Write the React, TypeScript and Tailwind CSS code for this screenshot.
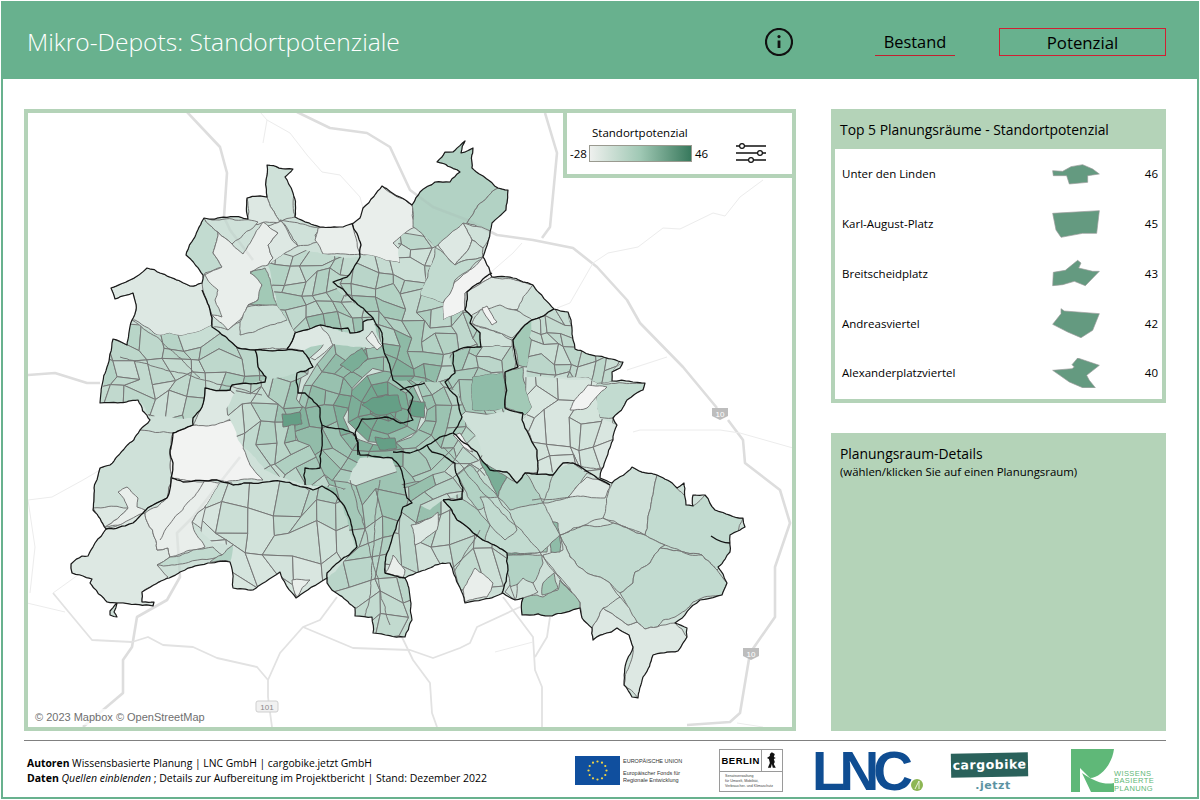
import React from 'react';

const FONT = { fontFamily: '"Open Sans", "Noto Sans", sans-serif' };

// colour ramp of the choropleth
const C = ['#f2f3f2', '#e9eeeb', '#dde8e3', '#cfe1d9', '#c2dbd0', '#b2d2c4', '#a2c9b6', '#8fbca8', '#7aae97', '#659f86', '#4f8f74'];

const RAMP: [number, number, number][] = [
  [238, 241, 239],
  [214, 229, 222],
  [179, 210, 196],
  [128, 177, 155],
  [70, 138, 109],
];

function rampColor(t: number) {
  const v = Math.max(0, Math.min(0.999, t)) * 4;
  const i = Math.floor(v);
  const f = v - i;
  const c = RAMP[i].map((a, k) => Math.round(a + (RAMP[i + 1][k] - a) * f));
  return `rgb(${c[0]},${c[1]},${c[2]})`;
}

function rng(seed: number) {
  let a = seed;
  return () => {
    a = (a + 0x6d2b79f5) | 0;
    let t = Math.imul(a ^ (a >>> 15), 1 | a);
    t = (t + Math.imul(t ^ (t >>> 7), 61 | t)) ^ t;
    return ((t ^ (t >>> 14)) >>> 0) / 4294967296;
  };
}

// edges get the same wiggle from both sides, so shared borders stay shared
function hash(x: number, y: number, k: number) {
  const s = Math.sin(Math.round(x * 10) * 12.9898 + Math.round(y * 10) * 78.233 + k * 37.7) * 43758.5453;
  return s - Math.floor(s);
}

function subdivide(a: number[], b: number[], out: number[][]) {
  const len = Math.hypot(a[0] - b[0], a[1] - b[1]);
  if (len < 5) return;
  const mx = (a[0] + b[0]) / 2;
  const my = (a[1] + b[1]) / 2;
  const d = Math.min(len * 0.07, 1.8);
  const mid = [mx + (hash(mx, my, 1) - 0.5) * 2 * d, my + (hash(mx, my, 2) - 0.5) * 2 * d];
  subdivide(a, mid, out);
  out.push(mid);
  subdivide(mid, b, out);
}

function wiggle(points: string, closed = true) {
  const pts = points.split(' ').map((p) => p.split(',').map(Number));
  const out: number[][] = [];
  pts.forEach((p, i) => {
    out.push(p);
    const next = pts[i + 1] ?? (closed ? pts[0] : null);
    if (next) subdivide(p, next, out);
  });
  return out.map((p) => `${p[0].toFixed(1)},${p[1].toFixed(1)}`).join(' ');
}

const HOT: [number, number, number, number][] = [
  [378, 404, 0.14, 20],
  [292, 418, 0.14, 13],
  [353, 362, 0.14, 14],
  [420, 408, 0.14, 13],
  [384, 442, 0.1, 16],
  [428, 488, 0.2, 9],
  [445, 430, 0.05, 14],
];

function field(x: number, y: number) {
  let t = 0.27 + 0.42 * Math.exp(-((x - 360) ** 2 + (y - 415) ** 2) / (2 * 76 * 76));
  for (const [hx, hy, a, s] of HOT) t += a * Math.exp(-((x - hx) ** 2 + (y - hy) ** 2) / (2 * s * s));
  return t;
}

type Cell = { pts: string; fill: string };

function quadCells(grid: [number, number][][], seed: number, base: number, spread: number) {
  const r = rng(seed + 99);
  const cells: Cell[] = [];
  const used = new Set<string>();
  const rows = grid.length - 1;
  const cols = grid[0].length - 1;
  for (let i = 0; i < rows; i++) {
    for (let j = 0; j < cols; j++) {
      if (used.has(`${i}:${j}`)) continue;
      const roll = r();
      let q: [number, number][];
      if (roll < 0.2 && j + 1 < cols && !used.has(`${i}:${j + 1}`)) {
        used.add(`${i}:${j + 1}`);
        q = [grid[i][j], grid[i][j + 1], grid[i][j + 2], grid[i + 1][j + 2], grid[i + 1][j + 1], grid[i + 1][j]];
      } else if (roll < 0.38 && i + 1 < rows && !used.has(`${i + 1}:${j}`)) {
        used.add(`${i + 1}:${j}`);
        q = [grid[i][j], grid[i][j + 1], grid[i + 1][j + 1], grid[i + 2][j + 1], grid[i + 2][j], grid[i + 1][j]];
      } else {
        q = [grid[i][j], grid[i][j + 1], grid[i + 1][j + 1], grid[i + 1][j]];
      }
      const cx = q.reduce((s, p) => s + p[0], 0) / q.length;
      const cy = q.reduce((s, p) => s + p[1], 0) / q.length;
      cells.push({
        pts: q.map((p) => `${p[0].toFixed(1)},${p[1].toFixed(1)}`).join(' '),
        fill: rampColor(field(cx, cy) + base + (r() - 0.5) * spread),
      });
    }
  }
  return cells;
}

function rectMesh(x0: number, y0: number, x1: number, y1: number, cols: number, rows: number, seed: number, base = 0, spread = 0.16) {
  const r = rng(seed);
  const dx = (x1 - x0) / cols;
  const dy = (y1 - y0) / rows;
  const grid: [number, number][][] = [];
  for (let i = 0; i <= rows; i++) {
    const row: [number, number][] = [];
    for (let j = 0; j <= cols; j++) {
      const px = x0 + j * dx;
      const py = y0 + i * dy;
      row.push([
        px + (r() - 0.5) * dx * 0.8 + 5 * Math.sin(py / 19 + seed),
        py + (r() - 0.5) * dy * 0.8 + 5 * Math.sin(px / 23 + seed),
      ]);
    }
    grid.push(row);
  }
  return quadCells(grid, seed, base, spread);
}

function polarMesh(radii: number[], sectors: number, seed: number, base = 0, spread = 0.12) {
  const r = rng(seed);
  const grid: [number, number][][] = [];
  radii.forEach((rad) => {
    const row: [number, number][] = [];
    for (let j = 0; j <= sectors; j++) {
      const a = ((j % sectors) / sectors) * Math.PI * 2;
      const k = rad * 0.05 + 1.2;
      const wob = 1 + 0.05 * Math.sin(a * 3 + seed);
      row.push([385 + Math.cos(a) * rad * 1.08 * wob + (r() - 0.5) * k * 2, 408 + Math.sin(a) * rad * wob + (r() - 0.5) * k * 2]);
    }
    row[sectors] = row[0];
    grid.push(row);
  });
  return quadCells(grid, seed, base, spread);
}

const OUTLINE = wiggle(
  '100,403 107,367 113,339 127,345 132,320 136,310 133,293 115,299 111,288 130,280 147,268 160,273 190,286 202,283 203,275 186,255 204,218 248,219 247,198 267,197 267,165 293,169 285,177 293,193 295,217 320,227 343,227 360,218 363,208 382,186 400,197 412,205 420,192 435,182 450,182 460,172 437,162 445,152 453,152 465,141 461,153 473,148 472,168 498,188 508,190 506,210 492,223 483,257 492,277 513,278 533,285 554,309 568,312 573,340 575,349 623,362 620,368 612,372 612,381 645,383 643,390 627,400 613,418 617,425 613,440 600,478 612,483 632,467 657,475 677,488 684,483 686,505 693,506 693,495 705,495 715,510 743,518 745,527 730,535 730,552 718,567 727,583 722,595 700,600 675,623 687,628 687,637 678,651 653,655 643,677 638,698 632,697 624,685 627,660 633,647 629,635 617,628 593,640 592,628 582,618 580,608 552,616 522,615 523,598 515,600 503,593 465,603 450,563 448,563 405,578 412,620 405,637 373,633 372,617 355,616 355,608 327,583 327,578 296,598 280,572 253,590 233,588 230,562 208,563 180,572 142,592 142,602 154,602 153,606 123,603 117,603 114,612 117,617 110,615 110,611 117,603 107,602 90,583 92,579 80,575 72,573 71,564 82,556 88,556 95,543 106,529 93,510 94,488 100,468 110,465 140,430 150,420 138,400',
);

// hand traced Planungsräume for the outskirts: [fill, points]
const REGIONS: [string, string][] = [
  [C[3], '267,165 293,169 295,217 280,222 268,200 267,197'],
  [C[2], '247,198 267,197 268,200 280,222 248,225'],
  [C[4], '204,218 218,232 213,253 222,267 205,273 202,280 186,255'],
  [C[3], '204,218 258,222 232,244 218,232'],
  [C[1], '218,232 232,244 243,254 263,222 278,233 268,245 273,258 268,265 250,272 262,282 258,300 248,305 240,320 228,330 212,315 222,317 215,300 218,290 205,275 222,267 213,253'],
  [C[2], '268,226 281,221 298,246 285,253 268,265 273,258 268,245 278,233'],
  [C[3], '280,220 320,227 315,235 318,242 298,246'],
  [C[1], '318,228 352,223 360,245 360,254 323,254 315,240'],
  [C[1], '352,223 363,208 382,186 412,205 415,227 400,237 393,243 400,250 400,263 367,255 360,254'],
  [C[5], '412,205 420,192 435,182 450,182 460,172 437,162 445,152 465,141 473,148 472,168 498,188 478,205 467,223 438,245 435,247 413,227'],
  [C[5], '498,188 508,190 506,210 492,232 467,223 478,205'],
  [C[3], '463,223 492,232 483,248 472,240'],
  [C[2], '438,245 463,223 472,240 468,250 455,265'],
  [C[3], '472,240 483,248 483,257 455,265 468,250'],
  [C[0], '483,257 492,277 465,293 465,310 443,320 443,303 450,287'],
  [C[4], '435,247 455,265 483,257 455,280 443,303 420,295 433,260'],
  [C[2], '492,277 533,285 521,310 500,310 480,310 468,318 465,293'],
  [C[3], '533,285 554,309 532,320 517,310'],
  [C[3], '480,310 500,305 520,312 532,320 512,338 490,330 472,323'],
  [C[0], '482,308 487,306 497,322 492,325'],
  [C[3], '470,323 480,332 480,347 512,347 512,340 490,330'],
  [C[6], '512,340 532,320 543,323 527,367 518,365'],
  [C[3], '532,320 554,309 568,312 575,349 567,368 527,367 543,332'],
  [C[4], '575,349 623,362 612,372 612,381 597,383 588,377 567,377 567,368'],
  [C[4], '597,383 645,383 643,390 627,400 613,418 617,425 600,418 595,388'],
  [C[6], '505,372 523,367 523,377 532,407 525,415 505,407'],
  [C[7], '472,377 503,372 505,410 472,410'],
  [C[4], '453,353 480,347 512,347 518,367 450,380'],
  [C[3], '523,420 533,412 613,418 613,440 600,478 573,463 550,473 537,475 537,453'],
  [C[4], '527,473 573,463 587,473 570,497 560,500 543,503 537,480'],
  [C[2], '587,477 600,480 610,485 605,498 567,498'],
  [C[3], '613,480 632,467 657,475 645,535 613,523 603,518'],
  [C[4], '657,475 677,488 693,506 705,495 715,510 743,518 730,552 717,570 702,555 687,553 660,548 665,545 645,535'],
  [C[4], '613,523 645,535 665,545 660,548 650,563 635,572 633,583 620,593 610,583 587,573 570,557 560,535 573,528'],
  [C[4], '660,548 687,553 702,555 717,570 727,583 722,595 702,598 693,602 675,617 663,620 657,627 645,629 637,622 620,593 633,583 635,572 650,563'],
  [C[2], '593,640 617,628 629,635 633,647 624,685 638,698 653,655 678,651 687,637 675,623 657,627 645,629 637,622 628,625 603,608 592,628'],
  [C[3], '603,608 610,597 620,597 637,622 628,625'],
  [C[3], '560,535 570,557 587,573 610,583 620,597 603,608 592,628 582,618 580,602 572,593 560,577 543,555 563,550'],
  [C[6], '522,615 523,598 537,595 543,597 558,590 560,580 580,603 580,608 552,616'],
  [C[6], '542,595 558,588 554,573 543,583'],
  [C[5], '507,555 542,555 543,563 533,583 520,583 510,587 507,570'],
  [C[3], '517,585 523,578 533,583 538,592 523,598 515,600'],
  [C[3], '505,592 510,585 515,600'],
  [C[8], '505,540 517,530 542,552 507,555'],
  [C[6], '510,513 540,510 545,512 547,552 542,552 517,530'],
  [C[7], '547,520 558,523 560,552 551,552'],
  [C[2], '132,320 136,310 133,293 115,299 111,288 130,280 147,268 160,273 190,286 202,283 203,290 212,315 212,325 185,335 157,335 135,320'],
  [C[3], '212,327 228,330 240,322 295,315 295,333 287,349 255,350 238,348'],
  [C[3], '240,322 247,307 277,305 287,320 240,335'],
  [C[6], '250,273 265,268 273,293 277,305 248,305 258,300 262,285'],
  [C[2], '287,349 295,333 312,328 320,325 333,345 315,360 303,351'],
  [C[4], '255,350 303,351 313,367 297,373 298,393 265,382 266,377 258,367'],
  [C[0], '173,433 193,425 240,420 250,433 243,448 250,465 263,480 217,480 183,482 172,478 170,465'],
  [C[2], '205,388 230,390 240,400 237,415 215,425 193,425 202,407'],
  [C[3], '232,385 265,382 270,420 255,425 240,400 230,390'],
  [C[3], '140,430 173,433 170,465 172,478 167,498 153,505 133,523 106,529 93,510 94,488 100,468 110,465'],
  [C[1], '127,487 138,498 137,507 145,510 133,522 105,527 128,508 118,492'],
  [C[2], '93,508 128,508 105,527'],
  [C[2], '106,529 145,513 157,550 168,548 170,557 157,565 168,577 142,592 142,602 154,602 153,606 123,603 117,603 107,602 90,583 80,575 72,573 71,564 82,556 95,543'],
  [C[1], '145,513 167,498 172,478 220,483 192,522 205,547 170,557 168,548 157,550'],
  [C[2], '220,483 232,483 233,500 225,510 240,537 213,542 192,522'],
  [C[4], '157,565 180,564 222,555 213,547 193,550 170,557'],
  [C[5], '222,555 233,545 247,547 233,562 210,562'],
  [C[4], '453,433 477,452 490,470 507,472 517,483 525,473 553,475 543,503 560,535 542,552 507,553 485,541 457,520 443,500 462,499 463,488 457,475 455,463 443,455'],
].map(([fill, pts]) => [fill, wiggle(pts)] as [string, string]);

// meshes of the smaller Planungsräume, each clipped to its zone
const ZONES: { id: string; clip: string; cells: Cell[] }[] = [
  {
    id: 'z-steglitz',
    clip: '220,483 233,485 273,481 303,487 313,490 322,486 342,503 357,547 327,573 327,578 296,598 280,572 253,590 233,588 230,562 233,545 213,543 192,522',
    cells: rectMesh(205, 478, 365, 605, 7, 5, 14, -0.03, 0.1),
  },
  {
    id: 'z-spandau',
    clip: '100,403 113,339 127,345 132,320 157,335 185,335 212,325 238,348 255,350 258,367 266,377 265,382 232,385 230,390 205,388 202,407 193,418 150,417 138,400',
    cells: rectMesh(92, 325, 272, 425, 10, 6, 7, 0.13, 0.2),
  },
  {
    id: 'z-reinickendorf',
    clip: '268,265 285,253 298,246 323,254 360,257 347,277 333,282 373,319 363,322 363,330 350,333 333,328 320,325 312,328 295,333 287,320 277,305',
    cells: rectMesh(262, 248, 378, 336, 8, 6, 21, 0.1, 0.2),
  },
  {
    id: 'z-pankow',
    clip: '360,257 367,255 400,263 400,237 415,227 435,247 420,295 443,303 443,320 465,310 472,317 470,323 480,333 481,347 468,347 453,352 455,373 445,382 428,382 408,387 393,380 383,347 373,319 333,282 347,277',
    cells: rectMesh(330, 228, 485, 392, 10, 11, 33, 0.08, 0.2),
  },
  {
    id: 'z-lichtenberg',
    clip: '449,355 480,347 512,347 518,367 503,372 472,377 472,410 505,408 505,412 458,418 462,407 460,397 445,382 455,373',
    cells: rectMesh(440, 345, 520, 420, 6, 5, 41, 0.1, 0.18),
  },
  {
    id: 'z-marzahn',
    clip: '532,320 554,309 568,312 575,349 623,362 612,372 612,381 597,383 588,377 527,377 527,367',
    cells: rectMesh(525, 305, 625, 385, 8, 6, 52, 0.1, 0.12),
  },
  {
    id: 'z-friedrichsfelde',
    clip: '523,377 597,383 600,418 617,425 613,440 600,478 573,463 550,473 537,475 537,453 522,420 532,407',
    cells: rectMesh(518, 375, 622, 482, 6, 5, 57, -0.04, 0.1),
  },
  {
    id: 'z-tempelhof',
    clip: '327,578 355,547 342,503 322,486 305,485 320,468 360,455 392,458 400,467 407,498 412,503 403,507 385,567 385,573 405,578 412,620 405,637 373,633 372,617 355,615 355,605 330,590',
    cells: rectMesh(315, 480, 418, 642, 5, 8, 63, 0.1, 0.14),
  },
  {
    id: 'z-neukoelln',
    clip: '403,507 412,503 407,498 400,467 393,452 410,453 427,445 443,455 455,463 457,475 463,488 462,499 443,500 457,520 485,541 507,553 508,570 502,593 465,603 450,563 448,563 405,578 385,573 385,567',
    cells: rectMesh(384, 445, 512, 606, 7, 7, 71, 0.03, 0.14),
  },
  {
    id: 'z-center',
    clip: '225,410 240,385 297,373 313,367 303,351 320,345 383,347 393,380 428,382 445,382 460,397 462,417 478,440 490,470 465,492 443,500 430,510 408,500 392,458 360,458 345,490 305,485 265,470 238,440',
    cells: [
      ...polarMesh([1, 13, 25, 37], 9, 81, 0.0),
      ...polarMesh([37, 48, 60, 72, 84], 20, 82, 0.0),
      ...polarMesh([84, 97, 110, 124, 140, 160], 38, 83, -0.02),
    ],
  },
];

const OVERLAYS: [string, string][] = [
  [C[5], '457,475 470,465 498,497 478,510 465,490'],
  [C[8], '480,460 507,477 498,497'],
  [C[5], '498,497 507,477 517,483 525,473 543,503 530,505 510,510'],
  [C[4], '480,497 498,497 510,513 517,530 505,540 490,525'],
  [C[5], '443,500 462,499 478,510 490,525 485,541 457,520'],
  [C[0], '453,435 460,433 473,452 462,445'],
  [C[1], '385,573 393,555 405,570 403,578'],
  [C[1], '465,602 487,597 493,583 475,568 463,590'],
  [C[2], '411,525 425,520 438,512 437,530 415,545'],
  [C[1], '292,580 310,580 297,597'],
  [C[0], '588,385 607,387 587,408 570,410'],
  [C[9], '372,398 398,395 402,410 378,415 362,405'],
  [C[9], '282,414 300,412 302,424 283,427'],
  [C[8], '340,365 362,348 368,358 352,373'],
  [C[9], '410,400 425,402 424,418 410,415'],
  [C[9], '375,437 395,438 397,448 380,450'],
  [C[1], '366,338 372,331 382,346 377,350'],
].map(([fill, pts]) => [fill, wiggle(pts)] as [string, string]);

const THIN = [
  '443,447 480,490 540,552 572,593',
  '132,320 200,378',
  '120,357 262,395',
  '205,480 160,540',
  '380,480 365,620',
  '350,480 390,625',
  '645,535 603,518 560,535',
  '665,545 690,555 702,555',
  '573,463 610,470',
  '532,500 570,497',
  '440,600 480,530',
].map((p) => wiggle(p, false));

const DISTRICTS = [
  '352,223 361,245 360,257 347,277 333,282 373,318 382,333 383,347 390,367 393,380 407,390 413,397 408,410 413,420 400,423 385,417 362,419 355,433',
  '373,319 363,322 363,330 350,333 348,328 333,328 320,325 312,328 295,333 287,349',
  '202,290 210,310 212,327 238,348 255,350 303,351 313,367 297,373 298,393 305,393 320,408 322,425 353,433 360,455 392,458 400,467 407,498 412,503 403,507 385,567 385,573 405,578',
  '255,350 258,367 266,377 265,382 232,385 230,390 205,388 202,407 193,418 193,425 173,433 170,450 173,463 171,478 167,498 153,505 133,523 106,529',
  '172,478 183,482 217,480 233,485 273,481 303,487 313,490 322,486 342,503 357,547 327,573 327,578',
  '305,485 305,468 320,468 322,425',
  '355,433 358,455',
  '393,452 410,453 427,445 440,437 453,433 462,417 457,397 445,382 455,373 453,352 468,347 481,347 480,333 470,323 472,317 465,310 467,292 492,273',
  '425,383 408,387 400,390',
  '443,500 462,499 463,488 457,475 455,463 443,455 432,452 427,445',
  '453,433 477,452 490,470 507,472 517,483 525,473 553,475 563,463 573,463 597,478 610,485',
  '443,500 457,520 485,541 507,553 508,570 502,593',
  '522,420 537,450 537,475',
  '523,413 505,408 505,372 518,367 513,340 523,327 532,320 554,309',
  '523,413 522,420',
].map((p) => wiggle(p, false));

const MOTORWAYS = [
  '187,112 220,147 227,173 224,217 230,230 253,260',
  '297,112 330,128 367,133 390,147 410,190 433,207 467,220 497,235 533,240 573,248 597,267 627,300 640,323 683,367 717,408',
  '545,113 557,153 550,227 542,238',
  '27,375 55,373 87,383 100,383',
  '240,457 193,517 177,533 180,577 167,600 137,617 132,647 123,660 123,693 83,727',
  '728,420 743,440 745,463 780,490 790,523 775,567 775,617 750,653 740,713 730,722 687,725',
];

const ROADS_MID = [
  '53,593 67,610 92,640 132,642 148,637 163,645 193,647 217,658 257,667 268,680 268,697 272,727',
  '268,680 280,653 303,627 320,620 337,597',
  '303,627 353,648 410,650 433,658 460,648 470,643 477,627 520,607',
  '503,597 533,637 535,670 542,687 542,727',
  '550,617 547,637 535,657',
  '400,633 413,660 430,683 432,713 437,727',
];

const ROADS_THIN = [
  '28,500 52,497 83,480 100,470',
  '28,500 35,547 30,593',
  '53,593 78,575',
  '27,603 65,612',
  '260,112 267,120 263,143',
  '267,120 290,133 307,155 322,172 340,175 360,197 363,208',
  '763,180 740,197 725,216 713,213 680,229 663,228 638,247 608,253 593,263 570,303 557,308',
  '522,243 513,253 490,273',
  '667,357 627,370',
  '633,432 640,430 720,430 740,433 793,448',
  '495,652 533,642',
  '737,723 763,727',
];

function BerlinMap() {
  return (
    <svg viewBox="28 113 764 614" className="block w-full h-full">
      {MOTORWAYS.map((p) => (
        <polyline key={p} points={p} fill="none" stroke="#dddddd" strokeWidth={2.6} strokeLinejoin="round" />
      ))}
      {ROADS_MID.map((p) => (
        <polyline key={p} points={p} fill="none" stroke="#e2e2e2" strokeWidth={1.8} strokeLinejoin="round" />
      ))}
      {ROADS_THIN.map((p) => (
        <polyline key={p} points={p} fill="none" stroke="#ececec" strokeWidth={1} strokeLinejoin="round" />
      ))}
      <defs>
        <clipPath id="berlin">
          <polygon points={OUTLINE} />
        </clipPath>
        {ZONES.map((z) => (
          <clipPath key={z.id} id={z.id}>
            <polygon points={wiggle(z.clip)} />
          </clipPath>
        ))}
      </defs>
      <g clipPath="url(#berlin)" stroke="#767676" strokeWidth={1} strokeLinejoin="round">
        <polygon points={OUTLINE} fill={C[3]} stroke="none" />
        {REGIONS.map(([fill, pts], i) => (
          <polygon key={i} points={pts} fill={fill} />
        ))}
        {ZONES.map((z) => (
          <g key={z.id} clipPath={`url(#${z.id})`}>
            {z.cells.map((c, i) => (
              <polygon key={i} points={c.pts} fill={c.fill} />
            ))}
          </g>
        ))}
        {OVERLAYS.map(([fill, pts], i) => (
          <polygon key={i} points={pts} fill={fill} />
        ))}
        {THIN.map((p) => (
          <polyline key={p} points={p} fill="none" />
        ))}
        {/* roads shimmer faintly through the map */}
        {MOTORWAYS.map((p) => (
          <polyline key={p} points={p} fill="none" stroke="#9aa5a0" strokeOpacity={0.14} strokeWidth={2.6} />
        ))}
      </g>
      {DISTRICTS.map((p) => (
        <polyline key={p} points={p} fill="none" stroke="#111" strokeWidth={1.3} strokeLinejoin="round" />
      ))}
      <polygon points={OUTLINE} fill="none" stroke="#1a1a1a" strokeWidth={1.2} strokeLinejoin="round" />
      <path d="M711 536 C718 541 725 543 730 543" fill="none" stroke="#111" strokeWidth={1.3} />

      {/* motorway shields */}
      <g fontFamily='"Liberation Sans", sans-serif' fontSize="8" textAnchor="middle" fill="#fff">
        <path d="M712 408 H728 V416 L720 420 L712 416 Z" fill="#bdbdbd" />
        <text x="720" y="417">10</text>
        <path d="M743 648 H759 V656 L751 660 L743 656 Z" fill="#bdbdbd" />
        <text x="751" y="657">10</text>
        <rect x="256" y="701" width="22" height="11" rx="2" fill="#f1f1f1" stroke="#cfcfcf" />
        <text x="267" y="710" fill="#8a8a8a">101</text>
      </g>
    </svg>
  );
}

function SlidersIcon() {
  return (
    <svg viewBox="0 0 30 20" className="w-[30px] h-[20px]" fill="none" stroke="#111">
      <path d="M0 3 H30 M0 10 H30 M0 17 H30" strokeWidth={1.5} />
      <circle cx="6" cy="3" r="2.4" fill="#fff" strokeWidth={1.2} />
      <circle cx="24" cy="10" r="2.4" fill="#fff" strokeWidth={1.2} />
      <circle cx="15" cy="17" r="2.4" fill="#fff" strokeWidth={1.2} />
    </svg>
  );
}

function Legend() {
  return (
    <div className="absolute -top-1 -right-1 w-[233px] h-[69px] bg-white border-4 border-[#b4d3b8] pl-[3px]">
      <div className="pl-[22px] pt-[12px] text-[11.5px] leading-[16px] text-black">Standortpotenzial</div>
      <div className="flex items-center gap-[3px] mt-[3px] text-[11.5px] leading-[16px] text-black">
        <span className="w-[16px]">-28</span>
        <div className="w-[103px] h-[17px] border border-[#9a9a90] bg-gradient-to-r from-[#eef0ee] via-[#9fc8b4] to-[#37795d]" />
        <span>46</span>
        <div className="ml-[25px] -mt-[1px]">
          <SlidersIcon />
        </div>
      </div>
    </div>
  );
}

const TOP5 = [
  { name: 'Unter den Linden', value: 46, y: 70, pts: '670,60 700,62 725,48 760,42 790,55 810,70 775,75 775,95 720,100 712,75 672,75' },
  { name: 'Karl-August-Platz', value: 45, y: 222, pts: '670,190 810,182 802,250 760,250 695,262 680,240' },
  { name: 'Breitscheidplatz', value: 43, y: 370, pts: '672,368 708,362 745,332 755,340 748,355 790,365 810,365 768,408 735,395 700,405 670,408' },
  { name: 'Andreasviertel', value: 42, y: 518, pts: '695,475 705,482 810,490 790,540 755,562 715,545 670,522 695,490' },
  { name: 'Alexanderplatzviertel', value: 40, y: 668, pts: '670,660 728,655 735,650 728,643 745,623 810,645 772,675 780,690 798,712 760,712 720,695' },
];

function TopFive() {
  return (
    <div className="h-[294px] bg-[#b4d3b8] px-[4px] pb-[4px] flex flex-col">
      <div className="h-[40px] pl-[5px] pt-[10px] text-[13.9px] leading-[22px] text-black">Top 5 Planungsräume - Standortpotenzial</div>
      <div className="flex-1 bg-white flex flex-col">
        {TOP5.map((r) => (
          <div key={r.name} className="h-[49.8px] flex items-center pl-[7px] pr-[4px] text-[11.5px] text-black">
            <span className="w-[210px]">{r.name}</span>
            <svg viewBox={`668 ${r.y - 45} 144 90`} className="w-[48px] h-[30px]">
              <polygon points={r.pts} fill="#649a80" stroke="#9a9a9a" strokeWidth={2} />
            </svg>
            <span className="flex-1 text-right">{r.value}</span>
          </div>
        ))}
      </div>
    </div>
  );
}

function EuLogo() {
  const stars = Array.from({ length: 12 }, (_, i) => {
    const a = (i / 12) * Math.PI * 2;
    return [22.5 + Math.cos(a) * 9, 14.5 + Math.sin(a) * 9];
  });
  return (
    <div className="flex gap-[3px] items-start w-[112px]" style={{ fontFamily: '"Liberation Sans", sans-serif' }}>
      <svg viewBox="0 0 45 29" className="w-[45px] h-[29px] shrink-0">
        <rect width="45" height="29" fill="#104f9e" />
        {stars.map(([x, y], i) => (
          <circle key={i} cx={x} cy={y} r="1.1" fill="#f3d644" />
        ))}
      </svg>
      <div className="text-[5.5px] leading-[7px] text-[#333] whitespace-nowrap pt-[2px]">
        <div>EUROPÄISCHE UNION</div>
        <div className="mt-[5px]">Europäischer Fonds für</div>
        <div>Regionale Entwicklung</div>
      </div>
    </div>
  );
}

function BerlinLogo() {
  return (
    <div className="w-[64px] h-[43px] border border-[#9a9a9a] flex flex-col" style={{ fontFamily: '"Liberation Sans", sans-serif' }}>
      <div className="h-[22px] flex border-b border-[#9a9a9a]">
        <div className="w-[43px] border-r border-[#9a9a9a] text-[9.5px] font-bold tracking-[0.5px] leading-[21px] text-center text-black">BERLIN</div>
        <svg viewBox="0 0 20 20" className="w-[20px] h-[20px]">
          <path d="M10 2 L13 4 L12 7 L14 8 L12 9 L13 12 L12 14 L14 18 L11 18 L10 14 L9 18 L6 18 L8 13 L7 9 L5 8 L8 6 L8 4 Z" fill="#111" />
        </svg>
      </div>
      <div className="text-[3.6px] leading-[5px] text-[#444] pl-[5px] pt-[2px] whitespace-nowrap">
        <div>Senatsverwaltung</div>
        <div>für Umwelt, Mobilität,</div>
        <div>Verbraucher- und Klimaschutz</div>
      </div>
    </div>
  );
}

function LncLogo() {
  return (
    <div className="relative w-[115px] h-[50px]" style={{ fontFamily: '"Liberation Sans", sans-serif' }}>
      <div className="text-[55px] font-bold leading-[50px] tracking-[-6px] text-[#0f4d92]">LNC</div>
      <svg viewBox="0 0 12 12" className="absolute left-[99px] top-[33px] w-[12px] h-[12px]">
        <circle cx="6" cy="6" r="6" fill="#8db654" />
        <path d="M4 10 L8 2 V10" fill="none" stroke="#fff" strokeWidth={0.8} />
      </svg>
    </div>
  );
}

function CargobikeLogo() {
  return (
    <div className="w-[78px] flex flex-col items-center" style={{ fontFamily: '"DejaVu Sans", sans-serif' }}>
      <div className="w-[77px] h-[24px] bg-[#2a615b] -rotate-1 text-white text-[12.5px] font-bold leading-[24px] text-center tracking-[0.5px]">cargobike</div>
      <div className="text-[11px] font-bold leading-[15px] mt-[1px] pl-[8px] text-[#5c93a3] tracking-[0.5px]">.jetzt</div>
    </div>
  );
}

function WbpLogo() {
  return (
    <div className="flex items-end">
      <svg viewBox="0 0 43 43" className="w-[43px] h-[43px]">
        <path d="M0 0 H43 C41 16 29 29 19 29 L9 19 V43 H0 Z" fill="#5fb878" />
        <path d="M11 24 L20 43 H43 V34 C34 36 24 33 11 24 Z" fill="#5fb878" />
      </svg>
      <div className="text-[7.5px] leading-[7.5px] text-[#5fb878] tracking-[0.4px]" style={{ fontFamily: '"Liberation Sans", sans-serif' }}>
        <div>WISSENS</div>
        <div>BASIERTE</div>
        <div>PLANUNG</div>
      </div>
    </div>
  );
}

export default function App() {
  return (
    <div className="w-[1200px] h-[800px] bg-white p-px overflow-hidden" style={FONT}>
      <div className="w-full h-full border-2 border-[#68b18e] flex flex-col">
        {/* header */}
        <header className="h-[76px] shrink-0 bg-[#68b18e] flex items-center pl-[24px] pt-[2px]">
          <h1 className="text-[24.6px] font-light text-white">Mikro-Depots: Standortpotenziale</h1>
          <div className="flex-1" />
          <svg viewBox="0 0 28 28" className="w-[28px] h-[28px]" fill="none">
            <circle cx="14" cy="14" r="13" stroke="#111" strokeWidth={2.2} />
            <circle cx="14" cy="8.6" r="1.6" fill="#111" />
            <path d="M14 12.5 V20" stroke="#111" strokeWidth={2.8} />
          </svg>
          <button className="ml-[82px] w-[80px] h-[28px] pt-[1px] border-b border-[#c2202f] text-[16.4px] text-black">Bestand</button>
          <button className="ml-[44px] mr-[31px] w-[167px] h-[28px] pt-[1px] border border-[#d11f33] text-[16.8px] text-black">Potenzial</button>
        </header>

        {/* main */}
        <main className="flex pl-[21px] pt-[30px]">
          <div className="relative w-[772px] h-[622px] border-4 border-[#b4d3b8]">
            <BerlinMap />
            <Legend />
            <div className="absolute left-[3px] bottom-[2px] px-[4px] bg-white/70 text-[11px] leading-[16px] text-[#6f6f6f]" style={{ fontFamily: '"Liberation Sans", sans-serif' }}>
              © 2023 Mapbox © OpenStreetMap
            </div>
          </div>
          <aside className="ml-[35px] w-[335px] flex flex-col gap-[30px]">
            <TopFive />
            <div className="h-[298px] bg-[#b4d3b8] pl-[9px] pt-[10px] text-black">
              <div className="text-[13.9px] leading-[21px]">Planungsraum-Details</div>
              <div className="text-[11.4px] leading-[15px]">(wählen/klicken Sie auf einen Planungsraum)</div>
            </div>
          </aside>
        </main>

        {/* footer */}
        <footer className="ml-[21px] w-[1142px] mt-[9px] border-t border-[#808080] flex">
          <div className="pl-[3px] pt-[15px] w-[551px] text-[10.5px] leading-[15px] text-black">
            <div className="text-[10.35px]">
              <b>Autoren</b> Wissensbasierte Planung | LNC GmbH | cargobike.jetzt GmbH
            </div>
            <div>
              <b>Daten</b> <i>Quellen einblenden</i> ; Details zur Aufbereitung im Projektbericht | Stand: Dezember 2022
            </div>
          </div>
          <div className="pt-[15px]">
            <EuLogo />
          </div>
          <div className="ml-[32px] pt-[8px]">
            <BerlinLogo />
          </div>
          <div className="ml-[29px] pt-[5px]">
            <LncLogo />
          </div>
          <div className="ml-[23px] pt-[12px]">
            <CargobikeLogo />
          </div>
          <div className="ml-[43px] pt-[8px]">
            <WbpLogo />
          </div>
        </footer>
      </div>
    </div>
  );
}
